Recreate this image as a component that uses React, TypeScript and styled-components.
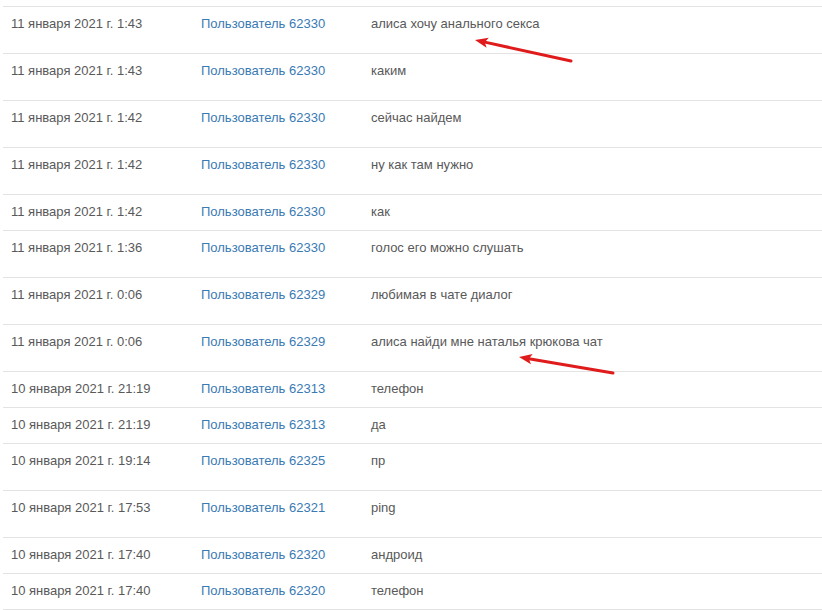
import React from "react";
import styled, { createGlobalStyle } from "styled-components";

const GlobalStyle = createGlobalStyle`
  html, body {
    margin: 0;
    padding: 0;
    background: #ffffff;
  }
  body {
    font-family: "Liberation Sans", Arial, sans-serif;
  }
`;

const Page = styled.div`
  position: relative;
  padding: 6px 0 0 3px;
  width: 819px;
`;

const Table = styled.table`
  width: 100%;
  border-collapse: collapse;
  font-size: 13px;
  line-height: 18px;
  color: #595959;
  border-bottom: 1px solid #e3e3e3;
`;

const Row = styled.tr<{ $tall?: boolean }>`
  border-top: 1px solid #e3e3e3;

  td {
    padding: 8px 8px ${({ $tall }) => ($tall ? "20px" : "9px")};
    vertical-align: top;
  }
`;

const DateCell = styled.td`
  width: 174px;
`;

const UserCell = styled.td`
  width: 154px;
`;

const UserLink = styled.a`
  color: #3a7ab3;
  text-decoration: none;
`;

const Arrow = styled.svg`
  position: absolute;
  left: 0;
  top: 0;
  pointer-events: none;
`;

type Entry = {
  date: string;
  user: string;
  text: string;
  tall: boolean;
};

const entries: Entry[] = [
  { date: "11 января 2021 г. 1:43", user: "Пользователь 62330", text: "алиса хочу анального секса", tall: true },
  { date: "11 января 2021 г. 1:43", user: "Пользователь 62330", text: "каким", tall: true },
  { date: "11 января 2021 г. 1:42", user: "Пользователь 62330", text: "сейчас найдем", tall: true },
  { date: "11 января 2021 г. 1:42", user: "Пользователь 62330", text: "ну как там нужно", tall: true },
  { date: "11 января 2021 г. 1:42", user: "Пользователь 62330", text: "как", tall: false },
  { date: "11 января 2021 г. 1:36", user: "Пользователь 62330", text: "голос его можно слушать", tall: true },
  { date: "11 января 2021 г. 0:06", user: "Пользователь 62329", text: "любимая в чате диалог", tall: true },
  { date: "11 января 2021 г. 0:06", user: "Пользователь 62329", text: "алиса найди мне наталья крюкова чат", tall: true },
  { date: "10 января 2021 г. 21:19", user: "Пользователь 62313", text: "телефон", tall: false },
  { date: "10 января 2021 г. 21:19", user: "Пользователь 62313", text: "да", tall: false },
  { date: "10 января 2021 г. 19:14", user: "Пользователь 62325", text: "пр", tall: true },
  { date: "10 января 2021 г. 17:53", user: "Пользователь 62321", text: "ping", tall: true },
  { date: "10 января 2021 г. 17:40", user: "Пользователь 62320", text: "андроид", tall: false },
  { date: "10 января 2021 г. 17:40", user: "Пользователь 62320", text: "телефон", tall: false },
];

const RedArrow: React.FC<{ x1: number; y1: number; x2: number; y2: number }> = ({ x1, y1, x2, y2 }) => {
  const angle = Math.atan2(y1 - y2, x1 - x2);
  const len = 14;
  const spread = 0.38;
  const ax = x1 - len * Math.cos(angle - spread);
  const ay = y1 - len * Math.sin(angle - spread);
  const bx = x1 - len * Math.cos(angle + spread);
  const by = y1 - len * Math.sin(angle + spread);
  const mx = x1 - (len - 4) * Math.cos(angle);
  const my = y1 - (len - 4) * Math.sin(angle);
  return (
    <g>
      <line x1={x2} y1={y2} x2={mx} y2={my} stroke="#e01b1b" strokeWidth={3} strokeLinecap="round" />
      <polygon points={`${x1},${y1} ${ax},${ay} ${mx},${my} ${bx},${by}`} fill="#e01b1b" />
    </g>
  );
};

const App: React.FC = () => {
  return (
    <>
      <GlobalStyle />
      <Page>
        <Table>
          <tbody>
            {entries.map((e, i) => (
              <Row key={i} $tall={e.tall}>
                <DateCell>{e.date}</DateCell>
                <UserCell>
                  <UserLink href="#">{e.user}</UserLink>
                </UserCell>
                <td>{e.text}</td>
              </Row>
            ))}
          </tbody>
        </Table>
        <Arrow width={822} height={610}>
          <RedArrow x1={475} y1={40} x2={571} y2={61} />
          <RedArrow x1={519} y1={357} x2={613} y2={373} />
        </Arrow>
      </Page>
    </>
  );
};

export default App;
